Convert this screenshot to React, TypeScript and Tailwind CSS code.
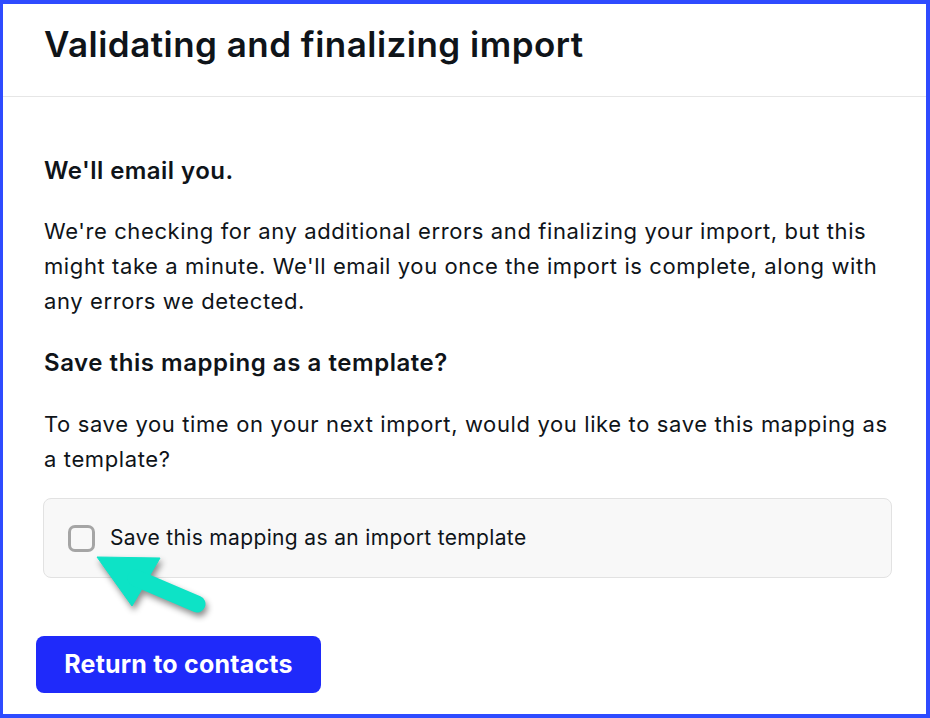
export default function App() {
  return (
    <div className="h-[718px] w-[930px] overflow-hidden bg-white font-['Inter',sans-serif] text-[#0f1419]">
      <div className="relative h-full w-full border-y-4 border-l-[3px] border-r-4 border-[#2e4bff] bg-white">
        <header className="flex h-[93px] items-center border-b border-[#e6e6e6] pb-[11px] pl-[41px]">
          <h1 className="text-[35px] font-semibold tracking-[0.48px]">Validating and finalizing import</h1>
        </header>

        <main className="pl-10 pr-[34px] pt-[60px]">
          <h2 className="pl-px text-[24px] font-semibold leading-[28px] tracking-[0.45px]">We'll email you.</h2>
          <p className="mt-[29px] pl-px text-[22px] leading-[35px] tracking-[0.6px]">
            We're checking for any additional errors and finalizing your import, but this
            <br />
            might take a minute. We'll email you once the import is complete, along with
            <br />
            any errors we detected.
          </p>
          <h2 className="mt-[30px] pl-px text-[24px] font-semibold leading-[28px] tracking-[0.55px]">
            Save this mapping as a template?
          </h2>
          <p className="mt-[30px] pl-px text-[22px] leading-[35px] tracking-[0.62px]">
            To save you time on your next import, would you like to save this mapping as
            <br />a template?
          </p>

          <label className="mt-[21px] flex h-20 items-center gap-[15px] rounded-lg border border-[#e2e2e2] bg-[#f8f8f8] pl-6">
            <span className="h-[27px] w-[27px] shrink-0 rounded-[7px] border-[3px] border-[#a5a5a5] bg-[#f8f8f8]" />
            <span className="text-[21px] tracking-[0.35px]">Save this mapping as an import template</span>
          </label>

          <button className="-ml-[7px] mt-[58px] flex h-[57px] w-[285px] items-center justify-center rounded-lg bg-[#1f2afa] text-[25px] font-bold tracking-[0.2px] text-white">
            Return to contacts
          </button>
        </main>

        {/* pointer arrow over the checkbox */}
        <svg
          className="absolute left-[85px] top-[540px] drop-shadow-[2px_4px_3px_rgba(0,0,0,0.45)]"
          width="130"
          height="80"
          viewBox="0 0 130 80"
        >
          <g fill="#0de3c6" stroke="#0de3c6" strokeLinejoin="round">
            <polygon points="9,13 72,14 44,62" strokeWidth="1" />
            <line x1="48" y1="34" x2="109" y2="60" strokeWidth="17" strokeLinecap="round" />
          </g>
        </svg>
      </div>
    </div>
  );
}
